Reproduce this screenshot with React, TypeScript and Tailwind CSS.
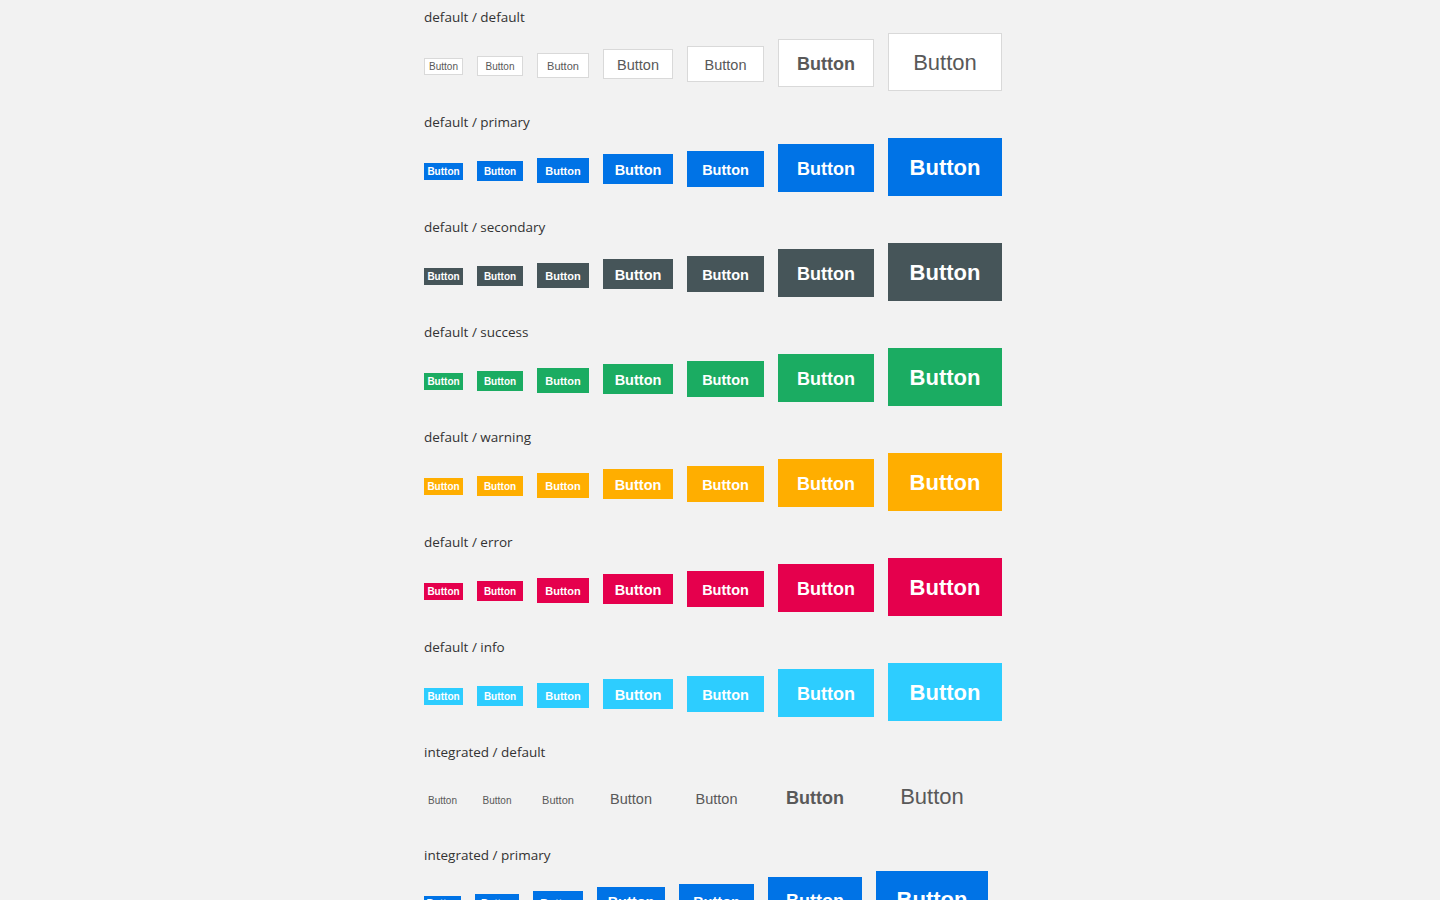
import React from "react";

type Tone = "default" | "primary" | "secondary" | "success" | "warning" | "error" | "info";

const sizes = [
  { w: "w-[39px]", h: "h-[17px]", text: "text-[10px]", weight: "" },
  { w: "w-[46px]", h: "h-[20px]", text: "text-[10px]", weight: "" },
  { w: "w-[52px]", h: "h-[25px]", text: "text-[11px]", weight: "" },
  { w: "w-[70px]", h: "h-[30px]", text: "text-[14.5px]", weight: "" },
  { w: "w-[77px]", h: "h-[36px]", text: "text-[14.5px]", weight: "" },
  { w: "w-[96px]", h: "h-[48px]", text: "text-[18px]", weight: "font-bold" },
  { w: "w-[114px]", h: "h-[58px]", text: "text-[22px]", weight: "" },
];

const integratedSizes = [
  { w: "w-[37px]", h: "h-[15px]", text: "text-[10px]", weight: "" },
  { w: "w-[44px]", h: "h-[18px]", text: "text-[10px]", weight: "" },
  { w: "w-[50px]", h: "h-[23px]", text: "text-[11px]", weight: "" },
  { w: "w-[68px]", h: "h-[28px]", text: "text-[14.5px]", weight: "" },
  { w: "w-[75px]", h: "h-[34px]", text: "text-[14.5px]", weight: "" },
  { w: "w-[94px]", h: "h-[46px]", text: "text-[18px]", weight: "font-bold" },
  { w: "w-[112px]", h: "h-[56px]", text: "text-[22px]", weight: "" },
];

const toneClass: Record<Tone, string> = {
  default: "bg-white border-[#d9d9d9] text-[#595959]",
  primary: "bg-[#0073e6] border-[#0073e6] text-white font-bold",
  secondary: "bg-[#465559] border-[#465559] text-white font-bold",
  success: "bg-[#1bac62] border-[#1bac62] text-white font-bold",
  warning: "bg-[#ffae00] border-[#ffae00] text-white font-bold",
  error: "bg-[#e5004d] border-[#e5004d] text-white font-bold",
  info: "bg-[#2dcdff] border-[#2dcdff] text-white font-bold",
};

const integratedToneClass: Record<Tone, string> = {
  default: "bg-transparent text-[#595959]",
  primary: "bg-[#0073e6] text-white font-bold",
  secondary: "bg-[#465559] text-white font-bold",
  success: "bg-[#1bac62] text-white font-bold",
  warning: "bg-[#ffae00] text-white font-bold",
  error: "bg-[#e5004d] text-white font-bold",
  info: "bg-[#2dcdff] text-white font-bold",
};

const tones: Tone[] = ["default", "primary", "secondary", "success", "warning", "error", "info"];

function ButtonRow({ tone, integrated }: { tone: Tone; integrated?: boolean }) {
  const list = integrated ? integratedSizes : sizes;
  return (
    <div className="mt-[6px] flex items-baseline gap-[14px]">
      {list.map((s, i) => (
        <button
          key={i}
          className={[
            "inline-flex items-center justify-center pt-[2px] leading-none",
            s.w,
            s.h,
            s.text,
            s.weight,
            integrated ? integratedToneClass[tone] : "border " + toneClass[tone],
          ].join(" ")}
          style={{ fontFamily: '"Liberation Sans", Arial, sans-serif' }}
        >
          Button
        </button>
      ))}
    </div>
  );
}

function Section({ label, tone, integrated }: { label: string; tone: Tone; integrated?: boolean }) {
  return (
    <section className="mb-[21px]">
      <div className="h-[20px] text-[13.5px] leading-[20px] text-[#333]">{label}</div>
      <ButtonRow tone={tone} integrated={integrated} />
    </section>
  );
}

export default function App() {
  return (
    <div className="min-h-screen bg-[#f2f2f2]" style={{ fontFamily: '"Open Sans", "Noto Sans", sans-serif' }}>
      <div className="mx-auto w-[592px] pt-[7px]">
        {tones.map((t) => (
          <Section key={t} label={`default / ${t}`} tone={t} />
        ))}
        {tones.map((t) => (
          <Section key={"i" + t} label={`integrated / ${t}`} tone={t} integrated />
        ))}
      </div>
    </div>
  );
}
